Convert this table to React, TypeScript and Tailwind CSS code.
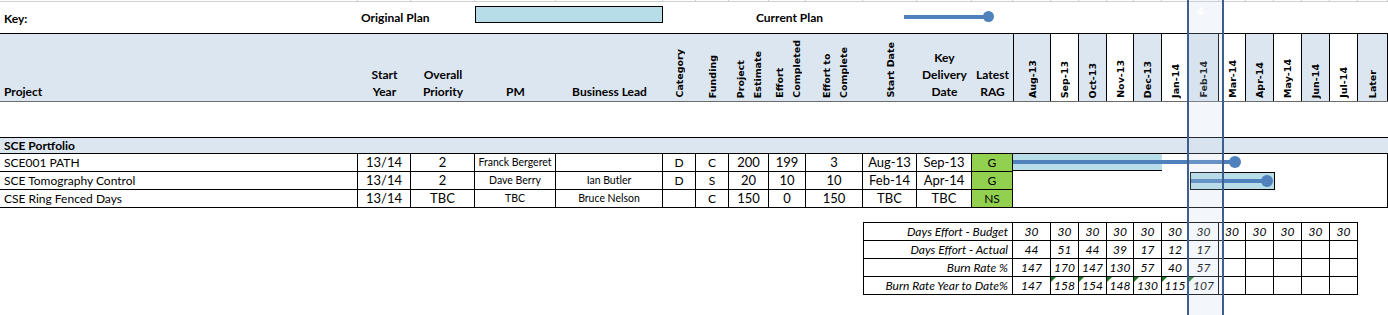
import React from 'react';

const GRID =
  'grid grid-cols-[358px_53px_64px_81px_107px_33px_33px_40px_37px_57px_54px_55px_41px_38px_28px_28px_27px_28px_27px_30px_27px_28px_28px_28px_28px_30px]';

const months = ['Aug-13', 'Sep-13', 'Oct-13', 'Nov-13', 'Dec-13', 'Jan-14', 'Feb-14', 'Mar-14', 'Apr-14', 'May-14', 'Jun-14', 'Jul-14', 'Later'];

const projects = [
  { name: 'SCE001 PATH', year: '13/14', priority: '2', pm: 'Franck Bergeret', lead: '', cat: 'D', fund: 'C', est: '200', done: '199', todo: '3', start: 'Aug-13', key: 'Sep-13', rag: 'G' },
  { name: 'SCE Tomography Control', year: '13/14', priority: '2', pm: 'Dave Berry', lead: 'Ian Butler', cat: 'D', fund: 'S', est: '20', done: '10', todo: '10', start: 'Feb-14', key: 'Apr-14', rag: 'G' },
  { name: 'CSE Ring Fenced Days', year: '13/14', priority: 'TBC', pm: 'TBC', lead: 'Bruce Nelson', cat: '', fund: 'C', est: '150', done: '0', todo: '150', start: 'TBC', key: 'TBC', rag: 'NS' },
];

const burn = [
  { label: 'Days Effort - Budget', values: ['30', '30', '30', '30', '30', '30', '30', '30', '30', '30', '30', '30'] },
  { label: 'Days Effort - Actual', values: ['44', '51', '44', '39', '17', '12', '17', '', '', '', '', ''] },
  { label: 'Burn Rate %', values: ['147', '170', '147', '130', '57', '40', '57', '', '', '', '', ''] },
  { label: 'Burn Rate Year to Date%', values: ['147', '158', '154', '148', '130', '115', '107', '', '', '', '', ''], flags: true },
];

function Vert({ children, className = '' }: { children: React.ReactNode; className?: string }) {
  return (
    <div className={`flex items-end justify-center pb-[3px] ${className}`}>
      <span className="[writing-mode:vertical-rl] rotate-180 font-['DejaVu_Sans',sans-serif] font-bold text-[9.5px] leading-[17px] text-black whitespace-pre text-left">
        {children}
      </span>
    </div>
  );
}

export default function App() {
  return (
    <div className="relative w-[1388px] h-[315px] overflow-hidden bg-white font-['Lato',sans-serif] text-black">
      {/* gridlines from row above */}
      <div className={`${GRID} h-[2px] border-b border-[#d0d0d0]`}>
        {Array.from({ length: 26 }).map((_, i) => (
          <div key={i} className="border-r border-[#d0d0d0]" />
        ))}
      </div>

      {/* key row */}
      <div className={`${GRID} h-[31px] items-center font-bold text-[12px]`}>
        <div className="pl-1 pt-[2px]">Key:</div>
        <div className="col-span-2 pl-[3px]">Original Plan</div>
        <div className="col-span-2 h-[17px] mt-[-6px] bg-[#b7dde8] border border-black" />
        <div className="col-span-2" />
        <div className="col-span-3 pl-[27px]">Current Plan</div>
        <div className="col-span-3 pl-[41px] flex items-center mt-[-2px]">
          <div className="w-[82px] h-[4px] bg-[#4f81bd]" />
          <div className="w-[11px] h-[11px] rounded-full bg-[#4f81bd] -ml-[3px]" />
        </div>
      </div>

      {/* header row */}
      <div className={`${GRID} h-[69px] border-t border-black border-b border-b-[#6b6b6b] font-bold text-[12px] leading-[17px]`}>
        <div className="bg-[#dce6f1] flex items-end pl-1 pb-[1px]">Project</div>
        <div className="bg-[#dce6f1] flex items-end justify-center text-center pb-[1px]">Start<br />Year</div>
        <div className="bg-[#dce6f1] flex items-end justify-center text-center pb-[1px]">Overall<br />Priority</div>
        <div className="bg-[#dce6f1] flex items-end justify-center pb-[1px]">PM</div>
        <div className="bg-[#dce6f1] flex items-end justify-center pb-[1px]">Business Lead</div>
        <Vert className="bg-[#dce6f1]">Category</Vert>
        <Vert className="bg-[#dce6f1]">Funding</Vert>
        <Vert className="bg-[#dce6f1]">{'Project\nEstimate'}</Vert>
        <Vert className="bg-[#dce6f1]">{'Effort\nCompleted'}</Vert>
        <Vert className="bg-[#dce6f1]">{'Effort to\nComplete'}</Vert>
        <Vert className="bg-[#dce6f1]">Start Date</Vert>
        <div className="bg-[#dce6f1] flex items-end justify-center text-center pb-[1px]">Key<br />Delivery<br />Date</div>
        <div className="bg-[#dce6f1] flex items-end justify-center text-center pb-[1px]">Latest<br />RAG</div>
        {months.map((m, i) => (
          <Vert
            key={m}
            className={`border-r border-black ${i === 0 ? 'border-l' : ''} ${i % 2 === 0 ? 'bg-[#dce6f1]' : 'bg-white'}`}
          >
            {m}
          </Vert>
        ))}
      </div>

      {/* blank row */}
      <div className="h-[35px]" />

      {/* portfolio row */}
      <div className="h-[17px] border-y border-black bg-[#dce6f1] pl-1 font-bold text-[12px] leading-[15px]">
        SCE Portfolio
      </div>

      {/* project rows */}
      <div className={`${GRID} grid-rows-[17px_18px_18px] border-b border-black text-[12px] leading-[17px]`}>
        {projects.map((p, r) => {
          const t = r > 0 ? 'border-t border-black' : '';
          const cell = `border-r border-black text-center ${t}`;
          return (
            <React.Fragment key={p.name}>
              <div className={`border-r border-black pl-1 ${t}`}>{p.name}</div>
              <div className={`${cell} text-[13px]`}>{p.year}</div>
              <div className={`${cell} text-[13px]`}>{p.priority}</div>
              <div className={`${cell} text-[10.5px]`}>{p.pm}</div>
              <div className={`${cell} text-[10.5px]`}>{p.lead}</div>
              <div className={cell}>{p.cat}</div>
              <div className={cell}>{p.fund}</div>
              <div className={`${cell} text-[13px]`}>{p.est}</div>
              <div className={`${cell} text-[13px]`}>{p.done}</div>
              <div className={`${cell} text-[13px]`}>{p.todo}</div>
              <div className={`${cell} text-[13px]`}>{p.start}</div>
              <div className={`${cell} text-[13px]`}>{p.key}</div>
              <div className={`${cell} bg-[#92d050]`}>{p.rag}</div>
              {r === 0 && (
                <div className="col-start-14 col-span-13 row-start-1 row-span-3 relative border-r border-black">
                  {/* SCE001 bars */}
                  <div className="absolute left-0 top-0 w-[149px] h-[17px] bg-[#b7dde8] border-b border-black" />
                  <div className="absolute left-0 top-[6px] w-[220px] h-[4px] bg-[#4f81bd]" />
                  <div className="absolute left-[216px] top-[2px] w-[12px] h-[12px] rounded-full bg-[#4f81bd]" />
                  {/* Tomography bars */}
                  <div className="absolute left-[177px] top-[18px] w-[85px] h-[18px] bg-[#b7dde8] border border-black" />
                  <div className="absolute left-[178px] top-[25px] w-[77px] h-[4px] bg-[#4f81bd]" />
                  <div className="absolute left-[248px] top-[21px] w-[12px] h-[12px] rounded-full bg-[#4f81bd]" />
                </div>
              )}
            </React.Fragment>
          );
        })}
      </div>

      {/* burn rate table */}
      <div className={`${GRID} mt-[14px] italic text-[12px] leading-[17px]`}>
        {burn.map((b, r) => (
          <React.Fragment key={b.label}>
            <div className={`col-start-11 col-span-3 border-l border-r border-b border-black text-right pr-[4px] h-[18px] ${r === 0 ? 'border-t h-[19px]' : ''}`}>
              {b.label}
            </div>
            {b.values.map((v, i) => (
              <div
                key={i}
                className={`relative border-r border-b border-black text-center ${r === 0 ? 'border-t' : ''}`}
              >
                {b.flags && i >= 1 && i <= 6 && (
                  <span className="absolute left-0 top-0 w-0 h-0 border-t-[5px] border-r-[5px] border-t-[#1e7a1e] border-r-transparent" />
                )}
                {v}
              </div>
            ))}
            <div />
          </React.Fragment>
        ))}
      </div>

      {/* current month highlight */}
      <div className="absolute top-0 bottom-0 left-[1187px] w-[37px] border-x-2 border-[#3d5f8f] bg-[#c3d5ea]/20 pointer-events-none">
        <div className="pl-[8px] pt-[3px] text-[11px] font-bold text-white">4</div>
      </div>
    </div>
  );
}
